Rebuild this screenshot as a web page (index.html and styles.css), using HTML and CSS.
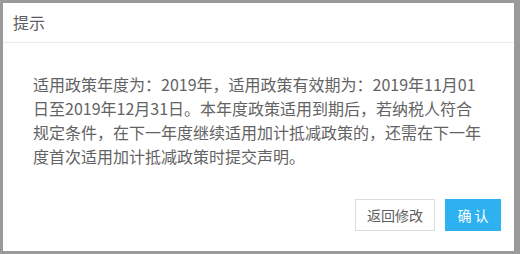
FILE: index.html
```html
<!DOCTYPE html>
<html lang="zh-CN">
<head>
<meta charset="utf-8">
<title>提示</title>
<link rel="stylesheet" href="styles.css">
</head>
<body>
<div class="dialog">
  <div class="dialog-header">提示</div>
  <div class="dialog-body">适用政策年度为：2019年，适用政策有效期为：2019年11月01日至2019年12月31日。本年度政策适用到期后，若纳税人符合规定条件，在下一年度继续适用加计抵减政策的，还需在下一年度首次适用加计抵减政策时提交声明。</div>
  <div class="dialog-footer">
    <button class="btn btn-default">返回修改</button>
    <button class="btn btn-primary">确 认</button>
  </div>
</div>
</body>
</html>
```
FILE: styles.css
```css
html, body {
  margin: 0;
  padding: 0;
}
body {
  width: 520px;
  height: 254px;
  background: #9a9a9a;
  font-family: "Noto Sans CJK SC", "Noto Sans", sans-serif;
  overflow: hidden;
}
.dialog {
  margin: 3px 0 0 3px;
  width: 511px;
  height: 248px;
  background: #fff;
  display: flex;
  flex-direction: column;
  box-sizing: border-box;
}
.dialog-header {
  height: 39px;
  line-height: 39px;
  padding-left: 10px;
  font-size: 16px;
  color: #5e5e5e;
  border-bottom: 1px solid #ebebeb;
}
.dialog-body {
  padding: 29px 29px 0 30px;
  font-size: 16px;
  line-height: 24px;
  color: #636363;
}
.dialog-footer {
  margin-top: auto;
  display: flex;
  justify-content: flex-end;
  gap: 10px;
  padding: 0 13px 20px 0;
}
.btn {
  height: 32px;
  font-family: inherit;
  font-size: 14px;
  border-radius: 0;
  cursor: pointer;
  padding: 0;
  box-sizing: border-box;
}
.btn-default {
  width: 80px;
  background: #fff;
  color: #5e5e5e;
  border: 1px solid #dcdcdc;
}
.btn-primary {
  width: 56px;
  background: #2eb1f0;
  color: #fff;
  border: none;
}
```
